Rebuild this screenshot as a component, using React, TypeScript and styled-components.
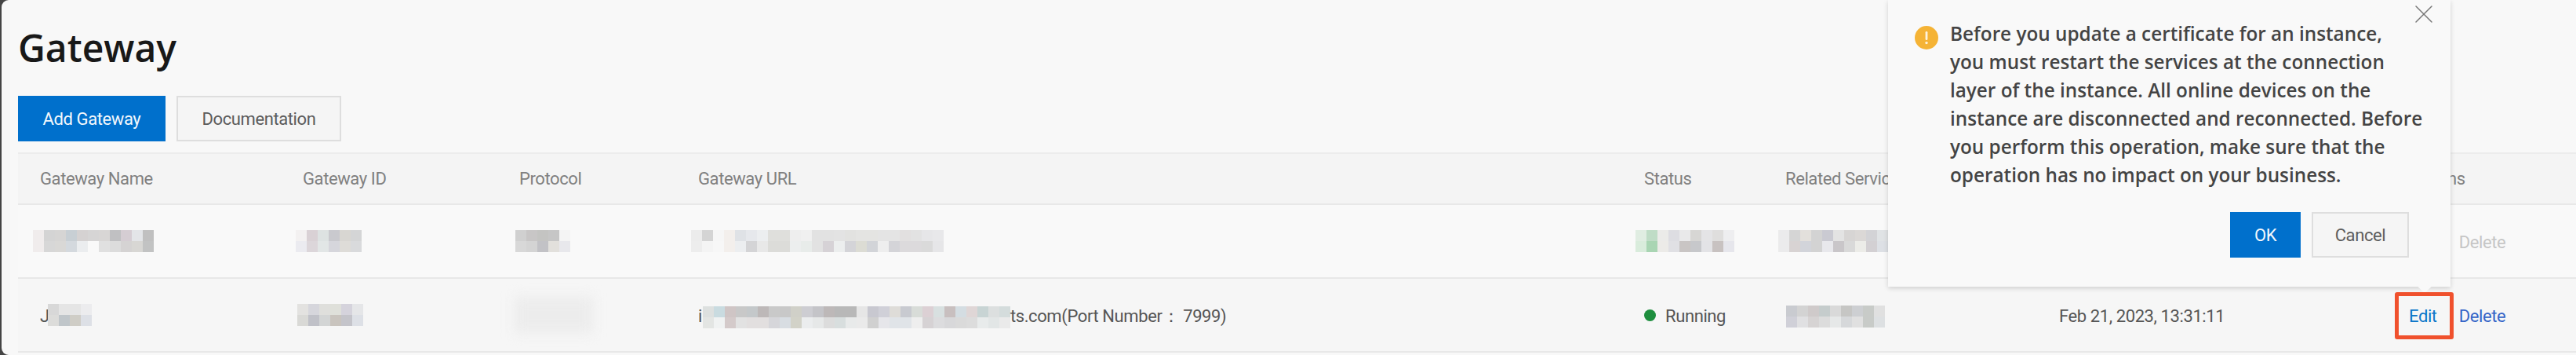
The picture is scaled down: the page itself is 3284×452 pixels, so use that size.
import React from "react";
import styled, { createGlobalStyle } from "styled-components";
import { X } from "lucide-react";

const GlobalStyle = createGlobalStyle`
  html, body {
    margin: 0;
    padding: 0;
    background: #454545;
    font-family: "Open Sans", "Noto Sans", sans-serif;
  }
`;

type Patch = string[][];

const patches: Record<string, Patch> = {
  firstName: [
    ["f0ecec", "d4d4d4", "d6d5d4", "c8cfd4", "d5d2d2", "d6d5d5", "d8d6d5", "c0c0c2", "d5cdd3", "e3e5e8", "c0c0c0"],
    ["f0ecec", "d7d7d7", "d9d8d6", "d4d9de", "ebedef", "f9f9f9", "e0e0e0", "dcdcdc", "d5d3d3", "d8d7d4", "c2c3c3"],
  ],
  firstId: [
    ["f3f1f1", "d9d1d5", "dde2e2", "c9c9ce", "d8d6d2", "d4d5d6"],
    ["ebebf0", "dcd6da", "e2e6e6", "d6d6dc", "dedcd8", "d9dadc"],
  ],
  firstProtocol: [
    ["d0d0d0", "c8c6c6", "c4c4c2", "c6c6c6", "f4f4f4"],
    ["d8d8d8", "d4d4d4", "c2c2c6", "e2e0dc", "e8e8ec"],
  ],
  firstUrl: [
    ["ececec", "d4d4d4", "f6f6f6", "f3efec", "dfe2e6", "e6e8ec", "eceef0", "dfdfdc", "dfdfdc", "eeeeee", "f0f0f0", "e2e2e2", "e2e2e2", "e3e3e3", "e2e2e0", "e4e4e2", "e4e4e2", "e4e4e4", "e4e4e4", "e2e0e0", "e2e2e2", "e6e6e8", "e8e8ea"],
    ["ededed", "f4f4f4", "f7f7f7", "f3efec", "eceef0", "d4d4d6", "e8e8e8", "dcdcd9", "dcdcd9", "eceeee", "e8ecea", "e2e2e2", "d6d2d6", "eceeee", "d4d4d8", "dcdcd4", "d2d4d8", "eeeeee", "d4d4d8", "dcdadc", "dcdadc", "dadada", "e6e6e8"],
  ],
  firstStatus: [
    ["e0ede2", "bfdcc6", "ebebe9", "dddde2", "e9e9ea", "d7d6d4", "e4e4e6", "dfdedd", "eeeef0"],
    ["d9ecdc", "a9d5b3", "ecebe8", "e0e0e4", "c9c5c4", "c7c8cb", "e3e3e6", "c8c2c1", "e6e6ec"],
  ],
  firstService: [
    ["ebebec", "d5d5d5", "e3e0dc", "d3d3d3", "cacad2", "e3e3e3", "d7d5d4", "dbd8d6", "d3d3d6", "e0e3e5"],
    ["ebebec", "d8d3d3", "d2d4da", "d3d3d3", "e8e8ec", "c9c6c9", "d9d9d9", "ecece8", "d3d0d3", "dde0e5"],
  ],
  secondName: [
    ["d8d8d8", "e5e5e5", "e5e5e5", "ececee"],
    ["dcdcda", "c0c6ca", "cfcdc6", "dde0e6"],
  ],
  secondId: [
    ["e3e2e0", "d6d6dc", "dfdfdc", "dfe0da", "d5d3dc", "e5e6e8"],
    ["d9d9d6", "c0c1c8", "d3d5d5", "c9c4be", "c4c4ca", "dde0e6"],
  ],
  secondUrl: [
    ["dde0df", "c9dbe0", "cfc5c5", "c8c8c8", "c4c8ca", "bdb8b8", "c9c9c9", "c8c8c8", "d0d0c8", "cdcdd2", "c4c4c8", "bdb8b8", "b8b8b8", "b8b8b8", "e6e6e6", "c8c8d0", "d0d0d8", "dedcd8", "c8cad0", "d8dcd8", "dcd0d4", "d8e0e0", "c8bfbf", "d4dde2", "dfd6d6", "c8d4d4", "dcdfdf", "d4dcdc"],
    ["e3e5e3", "f0f2f2", "d4caca", "e2e2e2", "e2dfdf", "e2dfdf", "d6d6da", "d8dde2", "d2d2c8", "ebedee", "e6e8e8", "dcdcdc", "d8dede", "e8eaea", "eaeaea", "d0d0d0", "e6e6ea", "e0e4e8", "e0e4e8", "eeeeee", "d6d2d4", "dcdcde", "d8d8da", "dadada", "dcdcdc", "e8ebeb", "e2e6e6", "eaeaea"],
  ],
  secondService: [
    ["c9cbd0", "d3d3d3", "cfcaca", "c5cccc", "d9d9d9", "c6c6c4", "cdcfd2", "c8cbc8", "e0e0e0"],
    ["d0d0d8", "e0e0e2", "d6d3d3", "dcdcdc", "e6e8e8", "d6d8da", "e0e0e0", "c8cbc8", "dde0e2"],
  ],
};

function Redacted({ patch, indent = 0, drop = 0 }: { patch: Patch; indent?: number; drop?: number }) {
  return (
    <Mosaic $indent={indent} $drop={drop}>
      {patch.map((row, rowIndex) => (
        <MosaicRow key={rowIndex}>
          {row.map((color, cellIndex) => (
            <MosaicCell key={cellIndex} $color={color} />
          ))}
        </MosaicRow>
      ))}
    </Mosaic>
  );
}

function App() {
  return (
    <>
      <GlobalStyle />
      <Screen>
        <Page>
          <Title>Gateway</Title>
          <Toolbar>
            <Button $primary $width={188}>Add Gateway</Button>
            <Button $width={210}>Documentation</Button>
          </Toolbar>
          <Table>
            <HeadRow>
              <Cell>Gateway Name</Cell>
              <Cell>Gateway ID</Cell>
              <Cell>Protocol</Cell>
              <Cell>Gateway URL</Cell>
              <Cell>Status</Cell>
              <Cell>Related Services</Cell>
              <Cell />
              <Cell>Actions</Cell>
            </HeadRow>
            <BodyRow>
              <Cell><Redacted patch={patches.firstName} indent={-9} /></Cell>
              <Cell><Redacted patch={patches.firstId} indent={-9} /></Cell>
              <Cell><Redacted patch={patches.firstProtocol} indent={-5} /></Cell>
              <Cell><Redacted patch={patches.firstUrl} indent={-9} /></Cell>
              <Cell><Redacted patch={patches.firstStatus} indent={-11} /></Cell>
              <Cell><Redacted patch={patches.firstService} indent={-9} /></Cell>
              <Cell />
              <Cell>
                <Action>Edit</Action>
                <Action $disabled>Delete</Action>
              </Cell>
            </BodyRow>
            <BodyRow $shaded>
              <Cell><RowText>J</RowText><Redacted patch={patches.secondName} indent={-2} /></Cell>
              <Cell><Redacted patch={patches.secondId} indent={-7} /></Cell>
              <Cell><SoftBlur /></Cell>
              <Cell>
                <RowText>i</RowText>
                <Redacted patch={patches.secondUrl} indent={1} drop={5} />
                <RowText>ts.com(Port Number：&nbsp;7999)</RowText>
              </Cell>
              <Cell><StatusDot /><RowText>Running</RowText></Cell>
              <Cell><Redacted patch={patches.secondService} indent={1} drop={3} /></Cell>
              <Cell><RowText>Feb 21, 2023, 13:31:11</RowText></Cell>
              <Cell>
                <Action $tone="#0b76c9">Edit</Action>
                <Action $tone="#3565c8">Delete</Action>
              </Cell>
            </BodyRow>
          </Table>
        </Page>

        <Popover>
          <CloseButton>
            <X size={40} strokeWidth={0.9} color="#777777" />
          </CloseButton>
          <PopoverBody>
            <WarningIcon viewBox="0 0 30 30">
              <circle cx="15" cy="15" r="15" fill="#f5b335" />
              <rect x="13.6" y="7" width="2.8" height="11" rx="1.2" fill="#fdf3dd" />
              <circle cx="15" cy="21.6" r="1.7" fill="#fdf3dd" />
            </WarningIcon>
            <Message>
              Before you update a certificate for an instance,<br />
              you must restart the services at the connection<br />
              layer of the instance. All online devices on the<br />
              instance are disconnected and reconnected. Before<br />
              you perform this operation, make sure that the<br />
              operation has no impact on your business.
            </Message>
          </PopoverBody>
          <PopoverFooter>
            <Button $primary $width={90}>OK</Button>
            <Button $width={124}>Cancel</Button>
          </PopoverFooter>
          <PopoverArrow />
        </Popover>

        <Callout />
      </Screen>
    </>
  );
}

const Screen = styled.div`
  position: relative;
  width: 3284px;
  height: 452px;
  overflow: hidden;
  background: #454545;
`;

const Page = styled.div`
  box-sizing: border-box;
  height: 452px;
  margin-left: 2px;
  padding: 33px 0 0 21px;
  background: #f8f8f8;
  border-radius: 9px 0 0 9px;
  color: #555555;
  font-family: Roboto, "Open Sans", sans-serif;
  font-size: 22px;
  letter-spacing: -0.4px;
`;

const Title = styled.h1`
  margin: 0;
  height: 75px;
  font-family: "Open Sans", sans-serif;
  font-size: 48px;
  line-height: 56px;
  font-weight: 600;
  letter-spacing: 0;
  color: #181818;
`;

const Toolbar = styled.div`
  display: flex;
  gap: 14px;
  margin-top: 14px;
`;

const Button = styled.div<{ $primary?: boolean; $width: number }>`
  box-sizing: border-box;
  display: flex;
  align-items: center;
  justify-content: center;
  width: ${(p) => p.$width}px;
  height: 58px;
  font-family: Roboto, "Open Sans", sans-serif;
  font-size: 22px;
  letter-spacing: -0.4px;
  color: ${(p) => (p.$primary ? "#f4f8fc" : "#5c5c5c")};
  background: ${(p) => (p.$primary ? "#0070cc" : "#f5f5f5")};
  border: 2px solid ${(p) => (p.$primary ? "#0070cc" : "#dedede")};
`;

const Table = styled.div`
  margin-top: 14px;
  border-top: 2px solid #ececec;
`;

const columns = "335px 276px 228px 1206px 180px 349px 446px 1fr";

const HeadRow = styled.div`
  box-sizing: border-box;
  display: grid;
  grid-template-columns: ${columns};
  align-items: center;
  height: 65px;
  background: #f4f4f4;
  border-bottom: 2px solid #e8e8e8;
  color: #808080;
`;

const BodyRow = styled.div<{ $shaded?: boolean }>`
  box-sizing: border-box;
  display: grid;
  grid-template-columns: ${columns};
  align-items: center;
  height: 94px;
  background: ${(p) => (p.$shaded ? "#f6f6f6" : "#f9f9f9")};
  border-bottom: 2px solid #e8e8e8;
`;

const Cell = styled.div`
  display: flex;
  align-items: center;
  padding-left: 28px;
  white-space: nowrap;
  min-width: 0;
`;

const RowText = styled.span`
  margin-top: 3px;
`;

const Mosaic = styled.div<{ $indent: number; $drop: number }>`
  flex: none;
  margin-left: ${(p) => p.$indent}px;
  margin-top: ${(p) => p.$drop}px;
`;

const MosaicRow = styled.div`
  display: flex;
`;

const MosaicCell = styled.div<{ $color: string }>`
  width: 14px;
  height: 14px;
  background: #${(p) => p.$color};
`;

const SoftBlur = styled.div`
  width: 100px;
  height: 46px;
  margin-left: -6px;
  background: #ececec;
  filter: blur(8px);
`;

const StatusDot = styled.span`
  width: 15px;
  height: 15px;
  margin-right: 12px;
  border-radius: 50%;
  background: #1e8e3e;
`;

const Action = styled.span<{ $disabled?: boolean; $tone?: string }>`
  margin-top: 3px;
  margin-right: 28px;
  color: ${(p) => (p.$disabled ? "#c6c6c6" : p.$tone ?? "#0b76c9")};
`;

const Popover = styled.div`
  position: absolute;
  left: 2407px;
  top: 0;
  box-sizing: border-box;
  width: 717px;
  height: 365px;
  padding: 25px 53px 0 34px;
  background: #f9f9f9;
  box-shadow: 0 2px 6px rgba(0, 0, 0, 0.16);
`;

const CloseButton = styled.div`
  position: absolute;
  top: -2px;
  right: 14px;
  display: flex;
`;

const PopoverBody = styled.div`
  display: flex;
  align-items: flex-start;
  gap: 15px;
`;

const WarningIcon = styled.svg`
  flex: none;
  width: 30px;
  height: 30px;
  margin-top: 8px;
`;

const Message = styled.div`
  font-size: 24.3px;
  line-height: 36px;
  font-weight: 600;
  color: #444444;
  white-space: nowrap;
`;

const PopoverFooter = styled.div`
  display: flex;
  justify-content: flex-end;
  gap: 14px;
  margin-top: 29px;
`;

const PopoverArrow = styled.div`
  position: absolute;
  left: 678px;
  bottom: -6px;
  width: 12px;
  height: 12px;
  background: #f9f9f9;
  transform: rotate(45deg);
`;

const Callout = styled.div`
  position: absolute;
  left: 3053px;
  top: 372px;
  box-sizing: border-box;
  width: 75px;
  height: 60px;
  border: 5px solid #f0512d;
  border-radius: 3px;
`;

export default App;
